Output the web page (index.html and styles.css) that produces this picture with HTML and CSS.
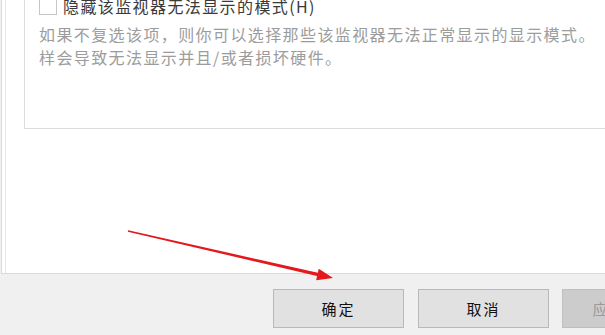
FILE: index.html
```html
<!DOCTYPE html>
<html lang="zh-CN">
<head>
  <meta charset="UTF-8">
  <title>监视器设置</title>
  <link rel="stylesheet" href="styles.css">
</head>
<body>

  <!-- tab page -->
  <div class="page">
    <div class="group">
      <label class="check-row">
        <span class="box"></span>
        <span class="check-label">隐藏该监视器无法显示的模式(H)</span>
      </label>
      <p class="hint">
        <span class="hint-line">如果不复选该项，则你可以选择那些该监视器无法正常显示的显示模式。</span>
        <span class="hint-line">样会导致无法显示并且/或者损坏硬件。</span>
      </p>
    </div>
  </div>

  <!-- dialog buttons -->
  <div class="footer">
    <button class="btn">确定</button>
    <button class="btn">取消</button>
    <button class="btn disabled">应用</button>
  </div>

  <!-- red annotation arrow -->
  <svg class="arrow" width="605" height="335" viewBox="0 0 605 335">
    <polygon fill="#e3191e" points="128.2,230.3 317.8,272.8 318.8,268.8 333,278 316.2,280.2 317,276 127.8,231.7"/>
  </svg>

</body>
</html>
```

FILE: styles.css
```css
body {
  margin: 0;
  width: 605px;
  height: 335px;
  overflow: hidden;
  background: #f0f0f0;
  font-family: "Noto Sans CJK SC", "Noto Sans", sans-serif;
  position: relative;
}

.page {
  box-sizing: border-box;
  height: 274px;
  margin-left: 1px;
  background: #fff;
  border-left: 1px solid #dadada;
  border-bottom: 1px solid #d9d9d9;
  box-shadow: inset 3px 0 0 #fff, inset 4px 0 0 #e6e6e6;
  overflow: hidden;
}

.group {
  box-sizing: border-box;
  height: 159px;
  margin: -30px -20px 0 22px;
  padding: 27px 0 0 14px;
  border: 1px solid #dcdcdc;
}

.check-row {
  display: flex;
  align-items: center;
  gap: 6px;
  height: 17px;
}

.box {
  box-sizing: border-box;
  width: 18px;
  height: 17px;
  background: #fff;
  border: 1px solid #c6c6c6;
}

.check-label {
  font-size: 16px;
  line-height: 17px;
  letter-spacing: 1.4px;
  color: #3a3a3a;
  white-space: nowrap;
}

.hint {
  margin: 8px 0 0;
  font-size: 16px;
  line-height: 22.5px;
  letter-spacing: 1.4px;
  color: #9c9c9c;
}

.hint-line {
  display: block;
  white-space: nowrap;
}

.footer {
  display: flex;
  gap: 14px;
  padding: 15px 0 0 273px;
}

.btn {
  flex-shrink: 0;
  width: 131px;
  height: 39px;
  padding: 0;
  background: #e1e1e1;
  border: 1px solid #b9b9b9;
  font-family: inherit;
  font-size: 15px;
  letter-spacing: 2px;
  color: #111;
}

.btn.disabled {
  width: 95px;
  margin-left: -1px;
  background: #cccccc;
  border-color: #bfbfbf;
  color: #9a9a9a;
}

.arrow {
  position: absolute;
  left: 0;
  top: 0;
}
```
